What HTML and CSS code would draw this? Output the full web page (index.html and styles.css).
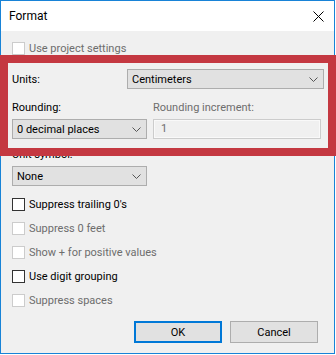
FILE: index.html
```html
<!DOCTYPE html>
<html lang="en">
<head>
    <meta charset="UTF-8">
    <title>Format</title>
    <link rel="stylesheet" href="styles.css">
</head>
<body>
    <div class="window">
        <div class="titlebar">
            <span class="title">Format</span>
            <svg class="close" width="11" height="11" viewBox="0 0 11 11">
                <path d="M0.5 0.5 L10.5 10.5 M10.5 0.5 L0.5 10.5" stroke="#000" stroke-width="1" fill="none"/>
            </svg>
        </div>

        <div class="content">
            <div class="check disabled"><span class="box"></span>Use project settings</div>

            <div class="units-row">
                <span class="label">Units:</span>
                <div class="select units">
                    <span>Centimeters</span>
                    <svg class="chevron" width="9" height="5" viewBox="0 0 9 5"><polyline points="0.5,0.5 4.5,4.5 8.5,0.5" fill="none" stroke="#555" stroke-width="1"/></svg>
                </div>
            </div>

            <div class="rounding-row">
                <div class="field">
                    <span class="label">Rounding:</span>
                    <div class="select small">
                        <span>0 decimal places</span>
                        <svg class="chevron" width="9" height="5" viewBox="0 0 9 5"><polyline points="0.5,0.5 4.5,4.5 8.5,0.5" fill="none" stroke="#555" stroke-width="1"/></svg>
                    </div>
                </div>
                <div class="field increment">
                    <span class="label disabled-text">Rounding increment:</span>
                    <div class="input">1</div>
                </div>
            </div>

            <div class="field symbol">
                <span class="label">Unit symbol:</span>
                <div class="select small">
                    <span>None</span>
                    <svg class="chevron" width="9" height="5" viewBox="0 0 9 5"><polyline points="0.5,0.5 4.5,4.5 8.5,0.5" fill="none" stroke="#555" stroke-width="1"/></svg>
                </div>
            </div>

            <div class="checks">
                <div class="check"><span class="box"></span>Suppress trailing 0's</div>
                <div class="check disabled"><span class="box"></span>Suppress 0 feet</div>
                <div class="check disabled"><span class="box"></span>Show + for positive values</div>
                <div class="check"><span class="box"></span>Use digit grouping</div>
                <div class="check disabled"><span class="box"></span>Suppress spaces</div>
            </div>

            <div class="buttons">
                <button class="btn default">OK</button>
                <button class="btn">Cancel</button>
            </div>
        </div>

        <div class="highlight"></div>
    </div>
</body>
</html>
```

FILE: styles.css
```css
body {
    margin: 0;
    background: #fff;
    font-family: Roboto, "Liberation Sans", sans-serif;
    font-size: 11px;
    color: #000;
}
.window {
    position: relative;
    width: 335px;
    height: 354px;
    box-sizing: border-box;
    border: 1px solid #1883d7;
    background: #f0f0f0;
}
.titlebar {
    height: 30px;
    background: #fff;
    display: flex;
    align-items: center;
    justify-content: space-between;
    padding: 0 10px 0 8px;
}
.title {
    font-size: 12px;
}
.close {
    display: block;
}
.content {
    padding: 11px 10px 0 11px;
}
.check {
    display: flex;
    align-items: center;
    height: 13px;
    line-height: 13px;
}
.check .box {
    width: 11px;
    height: 11px;
    border: 1px solid #333;
    background: #fff;
    margin-right: 4px;
    flex: none;
}
.check.disabled {
    color: #6d6d6d;
}
.check.disabled .box {
    border-color: #ccc;
}
.units-row {
    margin-top: 14px;
    display: flex;
    justify-content: space-between;
    align-items: center;
}
.label {
    display: block;
    line-height: 15px;
}
.disabled-text {
    color: #6d6d6d;
}
.select {
    height: 20px;
    box-sizing: border-box;
    border: 1px solid #adadad;
    background: #e1e1e1;
    display: flex;
    align-items: center;
    justify-content: space-between;
    padding: 0 5px 0 4px;
}
.select.units {
    width: 197px;
}
.select.small {
    width: 135px;
}
.chevron {
    display: block;
}
.rounding-row {
    display: flex;
    gap: 6px;
    margin-top: 11px;
}
.field .label {
    margin-bottom: 4px;
}
.increment .input {
    width: 168px;
    height: 20px;
    box-sizing: border-box;
    border: 1px solid #ccc;
    box-shadow: inset 0 0 0 1px #f9f9f9;
    color: #6d6d6d;
    padding-left: 7px;
    line-height: 18px;
}
.symbol {
    margin-top: 8px;
}
.checks {
    margin-top: 12px;
    display: flex;
    flex-direction: column;
    gap: 11px;
}
.buttons {
    margin-top: 14px;
    display: flex;
    gap: 8px;
    padding-left: 122px;
}
.btn {
    width: 88px;
    height: 22px;
    box-sizing: border-box;
    border: 1px solid #adadad;
    background: #e1e1e1;
    font-family: inherit;
    font-size: 11px;
    color: #000;
    padding: 0;
}
.btn.default {
    border: 2px solid #0078d7;
}
.highlight {
    position: absolute;
    top: 54px;
    left: -1px;
    width: 336px;
    height: 101px;
    box-sizing: border-box;
    border: 8px solid #c43841;
}
```
